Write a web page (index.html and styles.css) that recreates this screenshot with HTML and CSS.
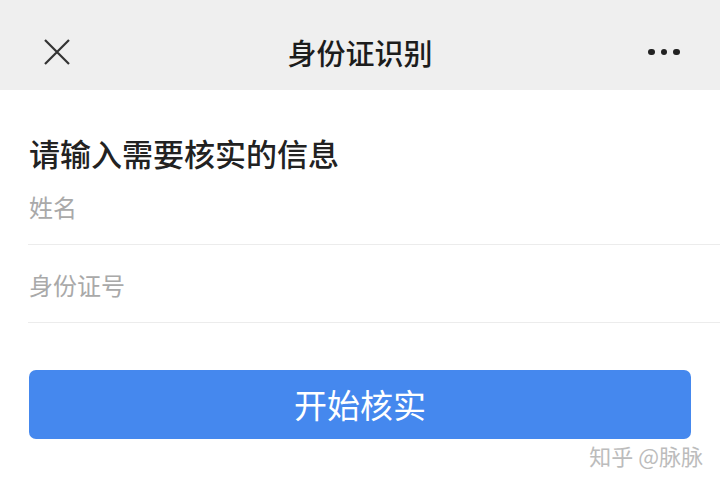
FILE: index.html
```html
<!DOCTYPE html>
<html lang="zh-CN">
<head>
<meta charset="utf-8">
<title>身份证识别</title>
<link rel="stylesheet" href="styles.css">
</head>
<body>
<div class="page">
  <header class="navbar">
    <div class="nav-left">
      <svg class="icon-close" width="26" height="26" viewBox="0 0 26 26">
        <path d="M1 1 L25 25 M25 1 L1 25" stroke="#333" stroke-width="2.2" fill="none" stroke-linecap="butt"/>
      </svg>
    </div>
    <div class="nav-title">身份证识别</div>
    <div class="nav-right">
      <span class="dot"></span><span class="dot"></span><span class="dot"></span>
    </div>
  </header>
  <main class="content">
    <h1 class="heading">请输入需要核实的信息</h1>
    <div class="field"><span class="placeholder">姓名</span></div>
    <div class="field"><span class="placeholder">身份证号</span></div>
    <button class="submit" type="button">开始核实</button>
  </main>
  <div class="watermark">知乎 @脉脉</div>
</div>
</body>
</html>
```
FILE: styles.css
```css
html, body {
  margin: 0;
  padding: 0;
  background: #ffffff;
}
body {
  font-family: "Noto Sans CJK SC", "Noto Sans", sans-serif;
  width: 720px;
  height: 485px;
  overflow: hidden;
}
.page {
  position: relative;
  width: 720px;
  height: 485px;
}
.navbar {
  height: 90px;
  box-sizing: border-box;
  padding-top: 14px;
  background: #efefef;
  display: flex;
  align-items: center;
  justify-content: space-between;
}
.nav-left {
  width: 120px;
  padding-left: 44px;
  box-sizing: border-box;
  display: flex;
  align-items: center;
}
.icon-close {
  display: block;
}
.nav-title {
  font-size: 29px;
  line-height: 34px;
  font-weight: 500;
  color: #1c1c1c;
}
.nav-right {
  width: 120px;
  padding-right: 40px;
  box-sizing: border-box;
  display: flex;
  justify-content: flex-end;
  align-items: center;
  gap: 6px;
}
.dot {
  width: 6.5px;
  height: 6.5px;
  border-radius: 50%;
  background: #222;
}
.content {
  padding-left: 29px;
}
.heading {
  margin: 48px 0 0 0;
  font-size: 31px;
  line-height: 29px;
  font-weight: 500;
  color: #222;
}
.field {
  height: 78px;
  box-sizing: border-box;
  padding-top: 28px;
  border-bottom: 1px solid #ececec;
  margin-left: -1px;
  padding-left: 1px;
}
.placeholder {
  display: block;
  font-size: 24px;
  line-height: 24px;
  color: #a9a9a9;
}
.submit {
  display: block;
  margin-top: 47px;
  width: 662px;
  height: 69px;
  border: none;
  border-radius: 7px;
  background: #4588ee;
  color: #ffffff;
  font-family: "Noto Sans CJK SC", "Noto Sans", sans-serif;
  font-size: 33px;
  line-height: 67px;
  padding: 0;
  text-align: center;
}
.watermark {
  position: absolute;
  right: 17px;
  top: 441px;
  font-size: 22px;
  line-height: 28px;
  color: #bcbcbc;
  white-space: nowrap;
}
```
